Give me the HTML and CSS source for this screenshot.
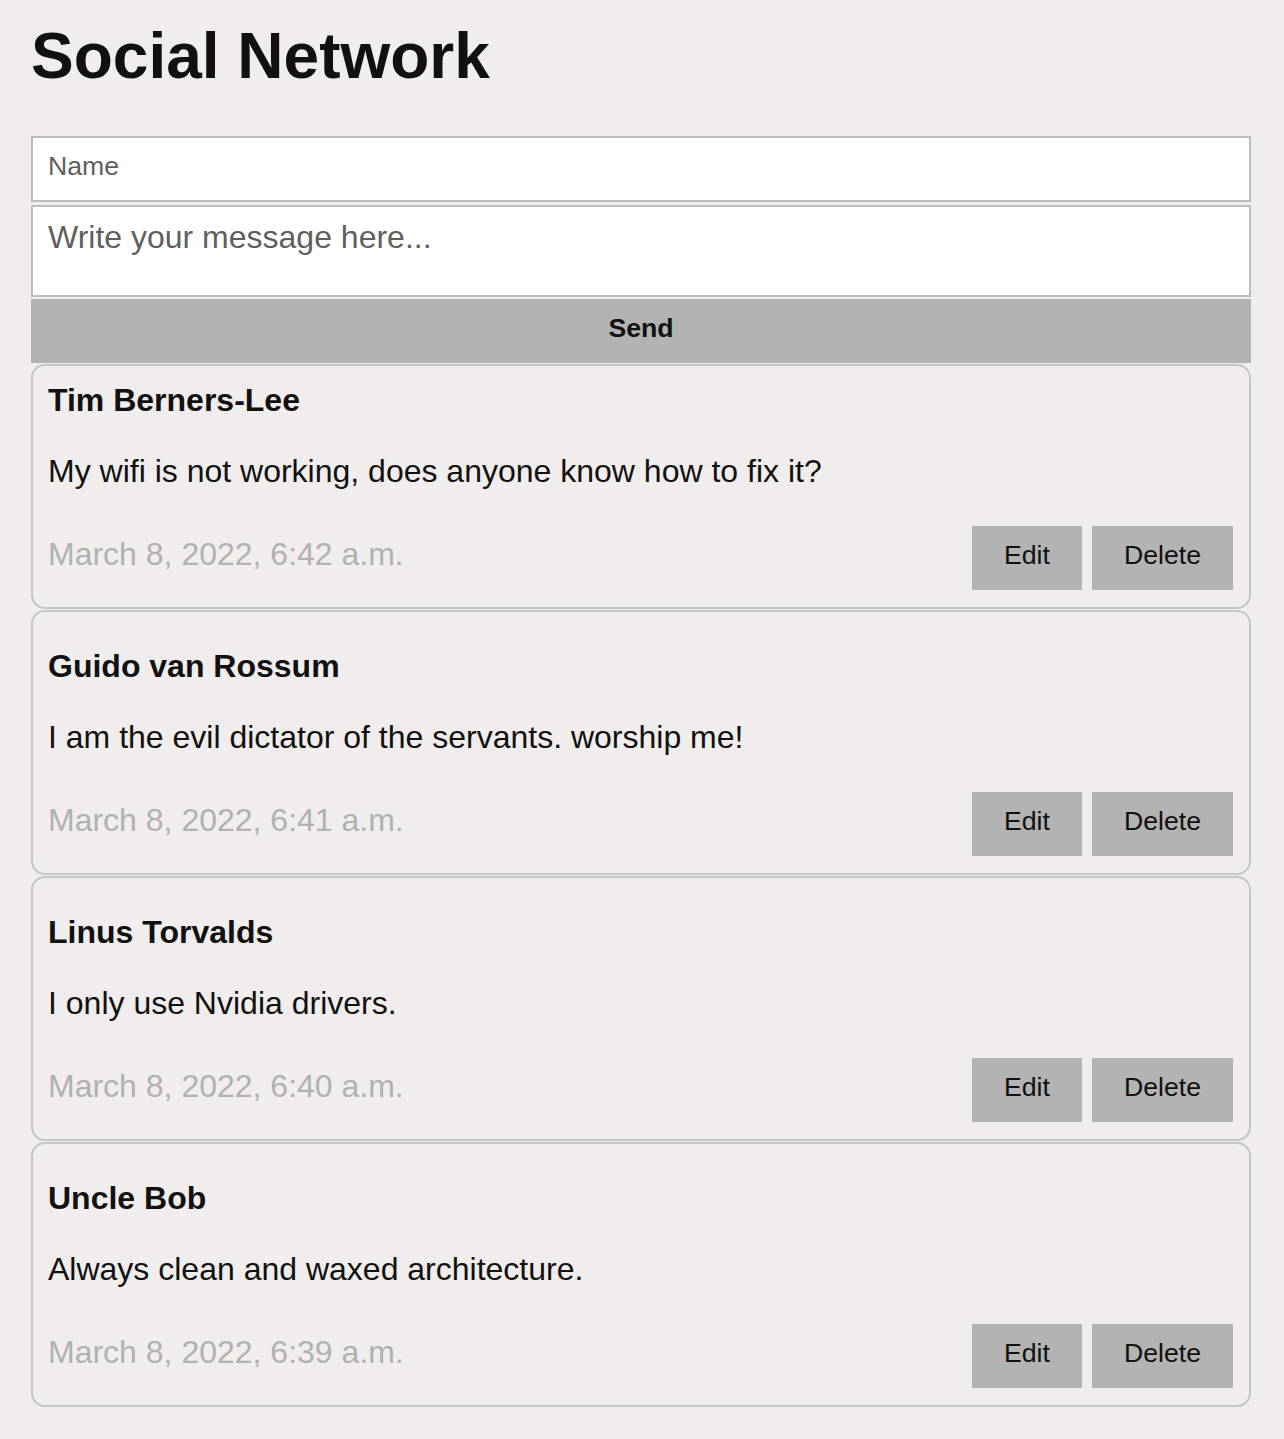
FILE: index.html
```html
<!DOCTYPE html>
<html lang="en">
<head>
<meta charset="utf-8">
<title>Social Network</title>
<link rel="stylesheet" href="styles.css">
</head>
<body>
<main class="page">
  <h1 class="title">Social Network</h1>
  <form class="composer">
    <input class="field field-name" type="text" placeholder="Name">
    <textarea class="field field-message" placeholder="Write your message here..."></textarea>
    <button class="send" type="button">Send</button>
  </form>
  <section class="feed">
    <article class="post">
      <h3 class="author">Tim Berners-Lee</h3>
      <p class="message">My wifi is not working, does anyone know how to fix it?</p>
      <div class="post-footer">
        <span class="date">March 8, 2022, 6:42 a.m.</span>
        <div class="actions"><button class="btn" type="button">Edit</button><button class="btn" type="button">Delete</button></div>
      </div>
    </article>
    <article class="post">
      <h3 class="author">Guido van Rossum</h3>
      <p class="message">I am the evil dictator of the servants. worship me!</p>
      <div class="post-footer">
        <span class="date">March 8, 2022, 6:41 a.m.</span>
        <div class="actions"><button class="btn" type="button">Edit</button><button class="btn" type="button">Delete</button></div>
      </div>
    </article>
    <article class="post">
      <h3 class="author">Linus Torvalds</h3>
      <p class="message">I only use Nvidia drivers.</p>
      <div class="post-footer">
        <span class="date">March 8, 2022, 6:40 a.m.</span>
        <div class="actions"><button class="btn" type="button">Edit</button><button class="btn" type="button">Delete</button></div>
      </div>
    </article>
    <article class="post">
      <h3 class="author">Uncle Bob</h3>
      <p class="message">Always clean and waxed architecture.</p>
      <div class="post-footer">
        <span class="date">March 8, 2022, 6:39 a.m.</span>
        <div class="actions"><button class="btn" type="button">Edit</button><button class="btn" type="button">Delete</button></div>
      </div>
    </article>
  </section>
</main>
</body>
</html>
```
FILE: styles.css
```css
* { box-sizing: border-box; }

html, body {
  margin: 0;
  padding: 0;
  background: #f0edec;
}

body {
  font-family: "Liberation Sans", Arial, Helvetica, sans-serif;
  color: #111;
}

.page {
  width: 1220px;
  margin-left: 31px;
  padding-top: 20px;
  padding-bottom: 30px;
}

.title {
  margin: 0 0 44px 0;
  font-size: 64px;
  font-weight: bold;
  line-height: 72px;
  color: #111;
}

.composer {
  display: flex;
  flex-direction: column;
  margin: 0;
}

.field {
  display: block;
  width: 100%;
  margin: 0;
  border: 2px solid #bdbdbd;
  background: #fff;
  font-family: "Liberation Sans", Arial, Helvetica, sans-serif;
  color: #111;
  outline: none;
}

.field::placeholder { color: #5f5f5f; opacity: 1; }

.field-name {
  height: 66px;
  padding: 0 15px 6px 15px;
  font-size: 26.67px;
}

.field-message {
  height: 92px;
  margin-top: 3px;
  padding: 12px 15px;
  font-size: 32px;
  line-height: 37px;
  resize: none;
}

.send {
  height: 64px;
  margin-top: 2px;
  padding: 0 0 6px 0;
  border: none;
  background: #b3b3b3;
  font-family: "Liberation Sans", Arial, Helvetica, sans-serif;
  font-size: 26.67px;
  font-weight: bold;
  color: #111;
}

.feed {
  display: flex;
  flex-direction: column;
  gap: 1px;
  margin-top: 1px;
}

.post {
  border: 2px solid #c6c6c6;
  border-radius: 14px;
  padding: 16px 16px 17px 15px;
}

.author {
  margin: 0 0 34px 0;
  font-size: 32px;
  font-weight: bold;
  line-height: 37px;
}

.post + .post .author { margin-top: 20px; }

.message {
  margin: 0 0 36px 0;
  font-size: 32px;
  line-height: 37px;
}

.post-footer {
  display: flex;
  align-items: center;
  justify-content: space-between;
}

.date {
  font-size: 32px;
  line-height: 37px;
  color: #b1b1b1;
  margin-top: -7px;
}

.actions {
  display: flex;
  gap: 10px;
}

.btn {
  height: 64px;
  padding: 0 32px 6px 32px;
  border: none;
  background: #b3b3b3;
  font-family: "Liberation Sans", Arial, Helvetica, sans-serif;
  font-size: 26.67px;
  color: #111;
}
```
